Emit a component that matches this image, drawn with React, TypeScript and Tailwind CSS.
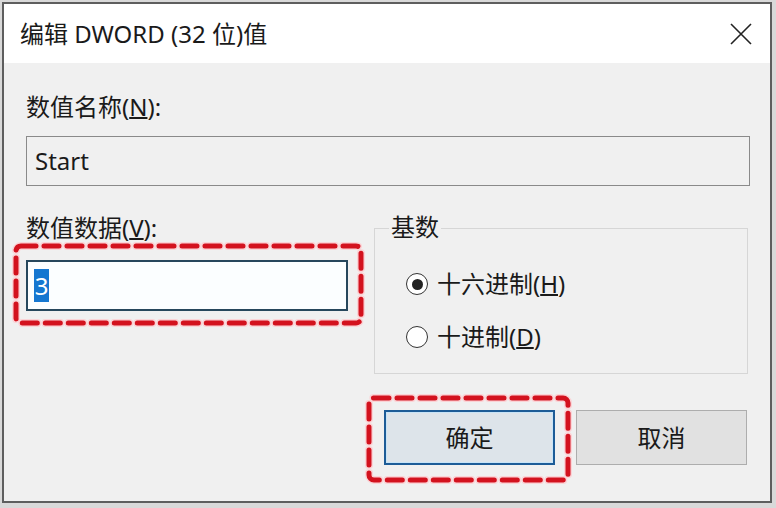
import React from "react";

const FONT = { fontFamily: '"Noto Sans", "Noto Sans CJK SC", sans-serif' };

function DashedBox({ left, top, width, height }: { left: number; top: number; width: number; height: number }) {
  // red hand-drawn style annotation that sits over the dialog
  return (
    <svg
      className="absolute pointer-events-none"
      style={{ left: left - 4, top: top - 4 }}
      width={width + 8}
      height={height + 8}
    >
      <rect
        x={4}
        y={4}
        width={width}
        height={height}
        rx={5}
        fill="none"
        stroke="#fbd3d6"
        strokeWidth={8}
        strokeDasharray="15 8"
        strokeLinecap="round"
      />
      <rect
        x={4}
        y={4}
        width={width}
        height={height}
        rx={5}
        fill="none"
        stroke="#d3121e"
        strokeWidth={5}
        strokeDasharray="15 8"
        strokeLinecap="round"
      />
    </svg>
  );
}

function Radio({ checked, label, hotkey }: { checked: boolean; label: string; hotkey: string }) {
  return (
    <div className="flex items-center gap-[9px]">
      <span className="flex h-[22px] w-[22px] shrink-0 items-center justify-center rounded-full border-[1.5px] border-[#333] bg-white">
        {checked && <span className="h-[11px] w-[11px] rounded-full bg-[#222]" />}
      </span>
      <span className="text-[24px] leading-[32px] text-[#1a1a1a]">
        {label}(<span className="underline underline-offset-1">{hotkey}</span>)
      </span>
    </div>
  );
}

export default function App() {
  return (
    <div className="relative h-[508px] w-[776px] overflow-hidden bg-[#d9d9d9] pl-[2px] pt-[2px]" style={FONT}>
      <div className="flex h-[501px] w-[770px] flex-col border-2 border-[#5e5e5e] bg-[#f0f0f0]">
        {/* Title bar */}
        <div className="flex h-[59px] shrink-0 items-center justify-between bg-white pl-[16px] pr-[18px]">
          <span className="text-[24px] leading-[32px] text-[#1a1a1a]">编辑 DWORD (32 位)值</span>
          <svg width="22" height="22" viewBox="0 0 22 22">
            <path d="M1 1 L21 21 M21 1 L1 21" stroke="#222" strokeWidth="1.6" fill="none" />
          </svg>
        </div>

        {/* Body */}
        <div className="flex flex-col pl-[22px] pr-[20px] pt-[28px]">
          <div className="text-[24px] leading-[32px] text-[#1a1a1a]">
            数值名称(<span className="underline underline-offset-1">N</span>):
          </div>
          <div className="mt-[13px] flex h-[50px] items-center border border-[#8a8a8a] bg-[#f0f0f0] pl-[8px] text-[24px] text-[#1a1a1a]">
            Start
          </div>

          <div className="mt-[26px] flex">
            <div className="flex w-[322px] flex-col">
              <div className="text-[24px] leading-[32px] text-[#1a1a1a]">
                数值数据(<span className="underline underline-offset-1">V</span>):
              </div>
              <div className="mt-[16px] flex h-[51px] items-center border-2 border-[#26475c] bg-[#fbfeff] pl-[6px]">
                <span className="flex h-[33px] w-[15px] items-center justify-center bg-[#1577d0] text-[24px] text-white">
                  3
                </span>
              </div>
            </div>

            <div className="relative ml-[26px] mt-[16px] h-[146px] w-[374px] border border-[#d6d6d6] pl-[31px] pt-[39px]">
              <span className="absolute -top-[18px] left-[14px] bg-[#f0f0f0] px-[2px] text-[24px] leading-[32px] text-[#1a1a1a]">
                基数
              </span>
              <div className="flex flex-col gap-[21px]">
                <Radio checked label="十六进制" hotkey="H" />
                <Radio checked={false} label="十进制" hotkey="D" />
              </div>
            </div>
          </div>

          <div className="mt-[36px] flex justify-end gap-[21px] pr-[3px]">
            <button
              type="button"
              className="flex h-[55px] w-[171px] items-center justify-center border-2 border-[#1d5c97] bg-[#dde4ea] text-[24px] text-[#1a1a1a] shadow-[inset_0_0_0_1px_#c8e4f7]"
            >
              确定
            </button>
            <button
              type="button"
              className="flex h-[55px] w-[171px] items-center justify-center border border-[#adadad] bg-[#e1e1e1] text-[24px] text-[#1a1a1a]"
            >
              取消
            </button>
          </div>
        </div>
      </div>

      <DashedBox left={16} top={246} width={345} height={77} />
      <DashedBox left={369} top={398} width={199} height={82} />
    </div>
  );
}
